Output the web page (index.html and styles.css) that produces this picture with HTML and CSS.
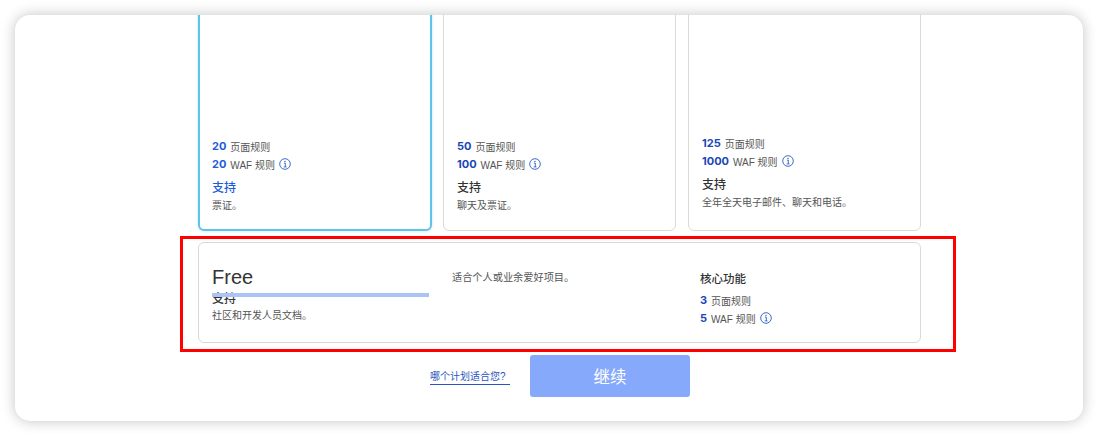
FILE: index.html
```html
<!DOCTYPE html>
<html lang="zh-CN">
<head>
  <meta charset="UTF-8">
  <title>选择计划</title>
  <link rel="stylesheet" href="styles.css">
</head>
<body>
  <svg class="icon-defs" width="0" height="0">
    <symbol id="info" viewBox="0 0 12 12">
      <circle cx="6" cy="6" r="5.3" fill="none" stroke="currentColor" stroke-width="0.9"/>
      <circle cx="6" cy="3.4" r="0.7" fill="currentColor"/>
      <path d="M4.9 5.1H6.3V8.8M4.7 8.9H7.5" fill="none" stroke="currentColor" stroke-width="0.9"/>
    </symbol>
  </svg>

  <div class="window">
    <div class="plans">
      <div class="plan plan-selected">
        <div class="rule"><b>20</b> 页面规则</div>
        <div class="rule"><b>20</b> WAF 规则 <svg class="info"><use href="#info"/></svg></div>
        <h3 class="support">支持</h3>
        <p class="support-text">票证。</p>
      </div>
      <div class="plan">
        <div class="rule"><b>50</b> 页面规则</div>
        <div class="rule"><b>100</b> WAF 规则 <svg class="info"><use href="#info"/></svg></div>
        <h3 class="support">支持</h3>
        <p class="support-text">聊天及票证。</p>
      </div>
      <div class="plan plan-raised">
        <div class="rule"><b>125</b> 页面规则</div>
        <div class="rule"><b>1000</b> WAF 规则 <svg class="info"><use href="#info"/></svg></div>
        <h3 class="support">支持</h3>
        <p class="support-text">全年全天电子邮件、聊天和电话。</p>
      </div>
    </div>

    <div class="free">
      <div class="free-name">
        <h2 class="free-title">Free</h2>
        <span class="free-bar"></span>
        <h3 class="support">支持</h3>
        <p class="support-text">社区和开发人员文档。</p>
      </div>
      <p class="free-desc">适合个人或业余爱好项目。</p>
      <div class="free-features">
        <h3 class="features-title">核心功能</h3>
        <div class="rule"><b>3</b> 页面规则</div>
        <div class="rule"><b>5</b> WAF 规则 <svg class="info"><use href="#info"/></svg></div>
      </div>
      <div class="highlight"></div>
    </div>

    <div class="actions">
      <a class="help-link" href="#">哪个计划适合您?</a>
      <button class="continue">继续</button>
    </div>
  </div>
</body>
</html>
```

FILE: styles.css
```css
* {
  box-sizing: border-box;
}

body {
  margin: 0;
  height: 436px;
  overflow: hidden;
  background: #fff;
  font-family: "Liberation Sans", "Noto Sans CJK SC", sans-serif;
  color: #4a4a4a;
}

.icon-defs {
  position: absolute;
}

.window {
  width: 1068px;
  height: 406px;
  margin: 15px;
  padding-left: 183px;
  background: #fff;
  border-radius: 15px;
  box-shadow: 0 0 14px rgba(0, 0, 0, 0.24);
  overflow: hidden;
}

.plans {
  display: grid;
  grid-template-columns: 234px 233px 1fr;
  gap: 11px;
  width: 723px;
  height: 222px;
  margin-top: -6px;
  margin-bottom: 11px;
}

.plan {
  padding: 0 13px 16px;
  display: flex;
  flex-direction: column;
  justify-content: flex-end;
  background: #fff;
  border: 1px solid #d9d9d9;
  border-radius: 6px;
}

.plan-selected {
  border: 2px solid #5fc3e8;
  padding-left: 12px;
  padding-bottom: 15px;
  box-shadow: 0 0 3px rgba(95, 170, 240, 0.35);
}

.plan-selected .rule b,
.plan-selected .support {
  color: #1b5ddb;
}

.plan-raised {
  margin-left: 1px;
  padding-bottom: 19px;
}

.rule {
  display: flex;
  align-items: center;
  gap: 4px;
  height: 18px;
  font-size: 10px;
  color: #555;
}

.rule b {
  font-family: Inter, "Liberation Sans", sans-serif;
  font-size: 11px;
  font-weight: 700;
  color: #1a47b8;
}

.info {
  width: 12px;
  height: 12px;
  color: #2a5cc4;
}

.support {
  margin: 6px 0 0;
  font-size: 12px;
  line-height: 18px;
  font-weight: 500;
  color: #333;
}

.support-text {
  margin: 0;
  font-size: 10px;
  line-height: 17px;
  color: #555;
}

.free {
  position: relative;
  display: grid;
  grid-template-columns: 240px 248px 1fr;
  width: 723px;
  height: 101px;
  padding: 0 13px;
  border: 1px solid #d9d9d9;
  border-radius: 6px;
}

.free-name {
  position: relative;
  padding-top: 22px;
}

.free-title {
  margin: 0;
  font-size: 20px;
  line-height: 24px;
  font-weight: 400;
  color: #333;
}

.free-name .support {
  margin-top: 0;
  line-height: 15px;
  padding-top: 3px;
}

.free-name .support-text {
  margin-top: 0;
  line-height: 17px;
}

.free-bar {
  position: absolute;
  top: 50px;
  left: 0;
  width: 217px;
  height: 4px;
  background: #a9c4f5;
}

.free-desc {
  margin: 28px 0 0;
  font-size: 10.2px;
  line-height: 14px;
  color: #555;
}

.free-features {
  padding: 27px 0 0 0;
}

.features-title {
  margin: 0 0 3px;
  font-size: 11.5px;
  line-height: 18px;
  font-weight: 500;
  color: #333;
}

.highlight {
  position: absolute;
  top: -7px;
  left: -19px;
  width: 776px;
  height: 116px;
  border: 3px solid #f00;
}

.actions {
  display: flex;
  align-items: center;
  gap: 21px;
  margin-top: 12px;
  padding-left: 232px;
}

.help-link {
  width: 80px;
  margin-top: 1px;
  margin-right: -1px;
  font-size: 10px;
  line-height: 15px;
  color: #2a55c0;
  text-decoration: none;
  border-bottom: 1px solid #2a55c0;
}

.continue {
  width: 160px;
  height: 42px;
  border: none;
  border-radius: 3px;
  background: #86a9fb;
  color: #fff;
  font-family: inherit;
  font-size: 16.5px;
}
```
